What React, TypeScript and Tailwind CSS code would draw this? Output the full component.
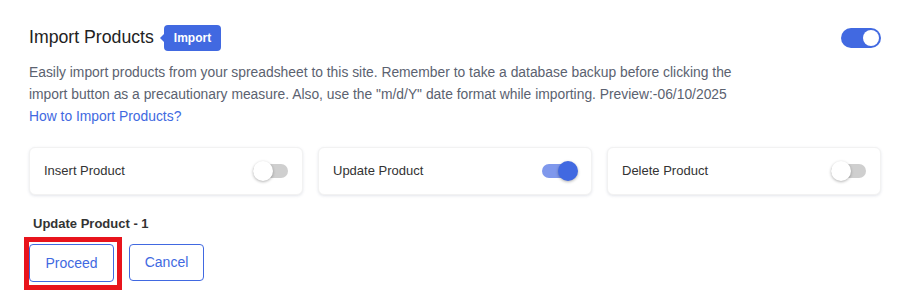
import { useState } from "react";

const Toggle = ({ on, onClick }: { on: boolean; onClick: () => void }) => (
  <button
    type="button"
    onClick={onClick}
    className="relative flex h-5 w-[36px] items-center"
  >
    <span
      className={`h-[14px] w-[35px] rounded-full ${
        on ? "bg-[#7f98ec]" : "bg-[#cfcfcf]"
      }`}
    />
    <span
      className={`absolute top-0 h-5 w-5 rounded-full shadow-[0_1px_3px_rgba(0,0,0,0.3)] ${
        on ? "right-0 bg-[#4169e1]" : "left-0 bg-white"
      }`}
    />
  </button>
);

const options = ["Insert Product", "Update Product", "Delete Product"];

export default function App() {
  const [enabled, setEnabled] = useState(true);
  const [active, setActive] = useState<string[]>(["Update Product"]);

  const flip = (name: string) =>
    setActive((prev) =>
      prev.includes(name) ? prev.filter((n) => n !== name) : [...prev, name]
    );

  return (
    <div className="min-h-screen bg-white px-[29px] pt-[25px] font-['Liberation_Sans',Arial,sans-serif]">
      <div className="flex h-[26px] items-center justify-between">
        <div className="flex items-center">
          <h2 className="text-[17.7px] leading-none text-[#222]">Import Products</h2>
          <span className="relative ml-[10px] flex h-[26px] items-center rounded-[4px] bg-[#4169e1] px-[10px] text-[12px] font-bold text-white">
            <span className="absolute -left-[4px] top-1/2 h-0 w-0 -translate-y-1/2 border-y-[5px] border-r-[5px] border-y-transparent border-r-[#4169e1]" />
            Import
          </span>
        </div>
        <button
          type="button"
          onClick={() => setEnabled(!enabled)}
          className={`flex h-5 w-10 items-center rounded-full px-[2px] ${
            enabled ? "justify-end bg-[#4169e1]" : "justify-start bg-[#cfcfcf]"
          }`}
        >
          <span className="h-4 w-4 rounded-full bg-white" />
        </button>
      </div>

      <p className="mt-[10px] max-w-[740px] text-[13.85px] leading-[22px] text-[#5b6270]">
        Easily import products from your spreadsheet to this site. Remember to take a
        database backup before clicking the import button as a precautionary measure.
        Also, use the "m/d/Y" date format while importing. Preview:-06/10/2025
        <br />
        <a href="#" className="text-[#4169e1]">
          How to Import Products?
        </a>
      </p>

      <div className="mt-[20px] grid grid-cols-3 gap-[15px]">
        {options.map((name) => (
          <div
            key={name}
            className="flex h-[48px] items-center justify-between rounded-[6px] border border-[#f2f2f2] bg-white pl-[14px] pr-[13px] shadow-[0_1px_3px_rgba(60,70,110,0.14)]"
          >
            <span className="text-[13px] text-[#333]">{name}</span>
            <Toggle on={active.includes(name)} onClick={() => flip(name)} />
          </div>
        ))}
      </div>

      <div className="mt-[19px] pl-1 text-[13px] font-bold leading-5 text-[#333]">
        Update Product - {active.includes("Update Product") ? 1 : 0}
      </div>

      <div className="mt-[10px] flex gap-[15px]">
        <div className="relative">
          <button
            type="button"
            className="h-[38px] w-[85px] rounded-[4px] border border-[#4169e1] bg-white text-[14px] text-[#4169e1]"
          >
            Proceed
          </button>
          <span className="pointer-events-none absolute -bottom-[8px] -left-[5px] -right-[8px] -top-[7px] border-[5px] border-[#e8141c]" />
        </div>
        <button
          type="button"
          className="h-[37px] w-[75px] rounded-[4px] border border-[#4169e1] bg-white text-[14px] text-[#4169e1]"
        >
          Cancel
        </button>
      </div>
    </div>
  );
}
